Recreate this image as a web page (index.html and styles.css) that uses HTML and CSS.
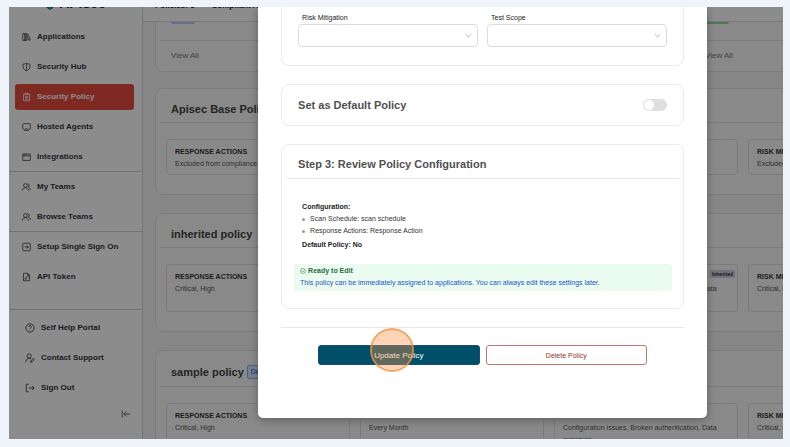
FILE: index.html
```html
<!DOCTYPE html>
<html lang="en">
<head>
  <meta charset="UTF-8" />
  <meta name="viewport" content="width=device-width, initial-scale=1.0" />
  <title>APIsec - Security Policy</title>
  <link rel="stylesheet" href="styles.css">
</head>
<body>
  <div class="app">
    <aside class="sidebar">
      <div class="logo">
        <svg class="logo-mark" viewBox="0 0 24 24"><path d="M9 2 3 8v8l7 6v-7M15 2l6 6v8l-7 6v-7"/></svg>
        <span>APIsec</span>
      </div>
      <nav class="menu">
        <a href="#"><svg viewBox="0 0 24 24"><path d="M2 3h6v18H2zM8 3h5v18H8zM13 6l4-1 5 15-4 1-5-13"/></svg>Applications</a>
        <a href="#"><svg viewBox="0 0 24 24"><path d="M12 2c3 2 6 2 9 2v7c0 6-4 9-9 11-5-2-9-5-9-11V4c3 0 6 0 9-2zM12 2v20"/></svg>Security Hub</a>
        <a href="#" class="active"><svg viewBox="0 0 24 24"><path d="M8 4H4v18h16V4h-4M8 2h8v4H8zM8 11h8M8 14h8M8 18h8"/></svg>Security Policy</a>
        <a href="#"><svg viewBox="0 0 24 24"><path d="M7 18H4a2 2 0 0 1-2-2V5a2 2 0 0 1 2-2h16a2 2 0 0 1 2 2v11a2 2 0 0 1-2 2h-3M12 15l5 6H7z"/></svg>Hosted Agents</a>
        <a href="#"><svg viewBox="0 0 24 24"><path d="M2 4h20v17H2zM2 9h20M6 4v4M10 4v4"/></svg>Integrations</a>
      </nav>
      <nav class="menu">
        <a href="#"><svg viewBox="0 0 24 24"><circle cx="9" cy="8" r="5"/><path d="M1 22c0-5 3-8 8-8s8 3 8 8M15 3a5 5 0 0 1 2 9c3 1 5 4 5 8"/></svg>My Teams</a>
        <a href="#"><svg viewBox="0 0 24 24"><circle cx="9" cy="8" r="5"/><path d="M1 22c0-5 3-8 8-8s8 3 8 8M15 3a5 5 0 0 1 2 9c3 1 5 4 5 8"/></svg>Browse Teams</a>
      </nav>
      <nav class="menu menu-settings">
        <a href="#"><svg viewBox="0 0 24 24"><rect x="2" y="2" width="20" height="20" rx="2"/><path d="M7 12h10M13 8l4 4-4 4"/></svg>Setup Single Sign On</a>
        <a href="#"><svg viewBox="0 0 24 24"><path d="M4 2h11l5 5v15H4zM15 2v5h5M11 14l5-5M14 9l3 2"/><circle cx="10" cy="16" r="2"/></svg>API Token</a>
      </nav>
      <nav class="menu menu-help">
        <a href="#"><svg viewBox="0 0 24 24"><circle cx="12" cy="12" r="10"/><path d="M9 9a3 3 0 1 1 4 3c-1 .5-1 1-1 2M12 17v1"/></svg>Self Help Portal</a>
        <a href="#"><svg viewBox="0 0 24 24"><circle cx="10" cy="7" r="5"/><path d="M2 22c0-6 3-9 8-9 2 0 3 0 4 1M14 22l1-5 5-4 2 3-5 5zM13 22h2"/></svg>Contact Support</a>
        <a href="#"><svg viewBox="0 0 24 24"><path d="M9 3H3v18h6M9 12h13M17 7l5 5-5 5"/></svg>Sign Out</a>
      </nav>
      <button class="collapse" aria-label="Collapse menu"><svg viewBox="0 0 24 24"><path d="M3 3v18M7 12h15M13 6l-6 6 6 6"/></svg></button>
    </aside>

    <main class="content">
      <header class="topbar">
        <span>Policies: 3</span>
        <span>Compliant Apps</span>
      </header>

      <div class="stats">
        <section class="stat">
          <div class="stat-bar"></div>
          <a href="#">View All</a>
        </section>
        <section class="stat">
          <div class="stat-bar green"></div>
          <a href="#">View All</a>
        </section>
      </div>

      <section class="policy">
        <h2>Apisec Base Policy</h2>
        <div class="policy-grid">
          <div class="box"><h3>RESPONSE ACTIONS</h3><p>Excluded from compliance</p></div>
          <div class="box"></div>
          <div class="box"></div>
          <div class="box"><h3>RISK MITIGATION</h3><p>Excluded from compliance</p></div>
        </div>
      </section>

      <section class="policy">
        <h2>inherited policy</h2>
        <div class="policy-grid">
          <div class="box"><h3>RESPONSE ACTIONS</h3><p>Critical, High</p></div>
          <div class="box"></div>
          <div class="box"><h3>TEST SCOPE <span class="inherited">Inherited</span></h3><p>Configuration issues, Broken authentication, Data exposure</p></div>
          <div class="box"><h3>RISK MITIGATION</h3><p>Critical, High</p></div>
        </div>
      </section>

      <section class="policy">
        <h2>sample policy <span class="default">Default</span></h2>
        <div class="policy-grid">
          <div class="box"><h3>RESPONSE ACTIONS</h3><p>Critical, High</p></div>
          <div class="box"><h3>SCAN SCHEDULE</h3><p>Every Month</p></div>
          <div class="box"><h3>TEST SCOPE</h3><p>Configuration issues, Broken authentication, Data exposure</p></div>
          <div class="box"><h3>RISK MITIGATION</h3><p>Critical, High</p></div>
        </div>
      </section>
    </main>

    <div class="overlay">
      <div class="modal" role="dialog" aria-label="Edit policy">
        <section class="panel fields">
          <div class="field">
            <label for="risk">Risk Mitigation</label>
            <div class="select-wrap">
              <select id="risk"><option></option></select>
              <svg viewBox="0 0 24 24"><path d="M3 6l9 12 9-12"/></svg>
            </div>
          </div>
          <div class="field">
            <label for="scope">Test Scope</label>
            <div class="select-wrap">
              <select id="scope"><option></option></select>
              <svg viewBox="0 0 24 24"><path d="M3 6l9 12 9-12"/></svg>
            </div>
          </div>
        </section>

        <section class="panel default-row">
          <label class="panel-title" for="default-policy">Set as Default Policy</label>
          <input type="checkbox" class="switch" id="default-policy">
        </section>

        <section class="panel review">
          <h2 class="panel-title">Step 3: Review Policy Configuration</h2>
          <div class="summary">
            <h4>Configuration:</h4>
            <ul>
              <li>Scan Schedule: scan schedule</li>
              <li>Response Actions: Response Action</li>
            </ul>
            <h4>Default Policy: No</h4>
          </div>
          <div class="notice">
            <strong><svg viewBox="0 0 24 24"><circle cx="12" cy="12" r="10"/><path d="M7 12l4 4 6-8"/></svg>Ready to Edit</strong>
            <p>This policy can be immediately assigned to applications. You can always edit these settings later.</p>
          </div>
        </section>

        <div class="actions">
          <button class="update">Update Policy<span class="click-mark"></span></button>
          <button class="delete">Delete Policy</button>
        </div>
      </div>
    </div>
  </div>
</body>
</html>
```

FILE: styles.css
```css
* {
  box-sizing: border-box;
}

body {
  margin: 0;
  height: 100vh;
  padding: 7px 7px 8px 9px;
  background: #eff4fa;
  font-family: "Liberation Sans", Arial, sans-serif;
  font-size: 7px;
  line-height: 12px;
  color: #222;
}

h2, h3, h4, p, ul {
  margin: 0;
  padding: 0;
}

a {
  color: inherit;
  text-decoration: none;
}

button {
  font-family: inherit;
  cursor: pointer;
}

svg {
  fill: none;
  stroke: currentColor;
  stroke-width: 2;
}

.app {
  position: relative;
  display: flex;
  height: 100%;
  overflow: hidden;
  background: #f5f5f5;
}

/* sidebar */
.sidebar {
  flex: none;
  width: 134px;
  background: #fff;
  border-right: 1px solid #cdd5e2;
  color: #33363d;
}

.logo {
  display: flex;
  justify-content: center;
  align-items: flex-end;
  gap: 3px;
  height: 15px;
  margin-top: -11px;
  padding-right: 1px;
  font-size: 14px;
  line-height: 16px;
  font-weight: bold;
  color: #0b2c3d;
}

.logo-mark {
  width: 12px;
  height: 15px;
  color: #00799a;
  stroke-width: 3;
}

.menu {
  padding: 0 8px 0 6px;
  border-bottom: 1px solid #cdd1d8;
}

.menu:first-of-type {
  padding-top: 11px;
}

.menu a {
  display: flex;
  align-items: center;
  gap: 6px;
  height: 26px;
  margin: 2px 0 4px;
  padding-left: 7px;
  border-radius: 3px;
  font-size: 8px;
  font-weight: bold;
}

.menu a:last-child {
  margin-bottom: 1px;
}

.menu svg {
  width: 9px;
  height: 10px;
}

.menu .active {
  background: #e54d40;
  color: #fff;
}

.menu-settings {
  padding-bottom: 18px;
}

.menu-help {
  padding-top: 3px;
  padding-left: 9px;
  border: none;
}

.menu-help svg {
  width: 10px;
}

.collapse {
  display: block;
  margin: 8px 11px 0 auto;
  padding: 0;
  border: none;
  background: none;
  color: #555;
}

.collapse svg {
  display: block;
  width: 10px;
  height: 10px;
}

/* policies list */
.content {
  flex: 1;
  min-width: 0;
  overflow: hidden;
}

.topbar {
  display: flex;
  gap: 17px;
  height: 15px;
  padding-left: 12px;
  background: #fff;
  border-bottom: 1px solid #ddd;
  font-size: 8px;
  line-height: 10px;
  font-weight: bold;
}

.topbar span {
  margin-top: -6px;
}

.stats {
  display: grid;
  grid-template-columns: 518px 518px;
  gap: 16px;
  padding-left: 12px;
}

.stat {
  height: 50px;
  padding: 0 4px;
  background: #fafafa;
  border: 1px solid #e4e4e4;
  border-top: none;
  border-radius: 0 0 8px 8px;
}

.stat-bar {
  height: 19px;
  border-bottom: 1px solid #e4e4e4;
}

.stat-bar::before {
  content: "";
  display: block;
  width: 24px;
  height: 2px;
  margin-left: 11px;
  border-radius: 0 0 2px 2px;
  background: #b9c6f5;
}

.stat-bar.green::before {
  background: #8fdc9f;
}

.stat a {
  display: block;
  padding: 9px 11px;
  font-size: 8px;
  color: #777;
}

.policy {
  width: 810px;
  margin: 16px 0 18px 12px;
  padding: 0 4px 19px;
  background: #fafafa;
  border: 1px solid #e4e4e4;
  border-radius: 8px;
}

.policy + .policy {
  margin-top: 0;
}

.policy h2 {
  display: flex;
  align-items: center;
  gap: 3px;
  padding: 14px 11px 7px;
  border-bottom: 1px solid #e4e4e4;
  font-size: 11px;
  color: #444;
}

.default {
  padding: 0 3px;
  border: 1px solid #7fb2f5;
  border-radius: 2px;
  background: #dbe9fd;
  font-size: 7px;
  font-weight: normal;
  color: #1d4fc0;
}

.policy-grid {
  display: grid;
  grid-template-columns: repeat(4, 184px);
  gap: 10px;
  padding: 16px 6px 0;
}

.box {
  padding: 6px 8px 4px;
  border: 1px solid #e0e0e0;
  border-radius: 4px;
}

.box h3 {
  display: flex;
  justify-content: space-between;
  font-size: 7px;
  color: #333;
}

.box p {
  color: #555;
}

.inherited {
  height: 8px;
  padding: 0 2px;
  margin: -1px -6px 0 0;
  border-radius: 1px;
  background: #d4d0e4;
  font-size: 5px;
  line-height: 8px;
}

/* edit dialog */
.overlay {
  position: absolute;
  inset: 0;
  background: rgba(0, 0, 0, 0.45);
}

.modal {
  width: 58%;
  margin: 0 76px 0 auto;
  padding: 0 23px 53px;
  background: #fff;
  border-radius: 0 0 5px 5px;
  box-shadow: 0 2px 8px rgba(0, 0, 0, 0.3);
}

.panel {
  margin-bottom: 18px;
  border: 1px solid #ebebeb;
  border-radius: 8px;
}

.panel-title {
  font-size: 11px;
  font-weight: bold;
  color: #505050;
}

.fields {
  display: flex;
  gap: 9px;
  padding: 5px 16px 18px;
  border-top: none;
  border-radius: 0 0 8px 8px;
}

.field {
  flex: 1;
}

.field label {
  display: block;
  padding-left: 4px;
}

.select-wrap {
  display: grid;
  align-items: center;
}

.select-wrap select,
.select-wrap svg {
  grid-area: 1 / 1;
}

.select-wrap select {
  width: 100%;
  height: 23px;
  appearance: none;
  background: #fff;
  border: 1px solid #dcdcdc;
  border-radius: 4px;
}

.select-wrap svg {
  justify-self: end;
  width: 7px;
  height: 7px;
  margin-right: 6px;
  color: #bbb;
  stroke-width: 3;
  pointer-events: none;
}

.default-row {
  display: flex;
  justify-content: space-between;
  align-items: center;
  height: 42px;
  padding: 0 16px;
}

.switch {
  display: flex;
  align-items: center;
  width: 24px;
  height: 12px;
  margin: 0;
  padding: 1px;
  appearance: none;
  border-radius: 6px;
  background: #dfdfe2;
}

.switch::before {
  content: "";
  width: 10px;
  height: 10px;
  border-radius: 50%;
  background: #fff;
}

.switch:checked {
  justify-content: flex-end;
  background: #004f68;
}

.review {
  padding: 0 4px 17px;
}

.review .panel-title {
  height: 34px;
  padding: 13px 12px 0;
  border-bottom: 1px solid #e8e8e8;
}

.summary {
  padding: 22px 16px 13px;
}

.summary h4 {
  font-size: 7px;
}

.summary ul {
  margin-bottom: 2px;
  list-style: none;
}

.summary li {
  display: flex;
  align-items: center;
  gap: 5px;
  color: #333;
}

.summary li::before {
  content: "";
  width: 3px;
  height: 3px;
  border-radius: 50%;
  background: #999;
}

.notice {
  margin: 0 7px 0 8px;
  padding: 1px 6px 2px;
  border-radius: 3px;
  background: #eafbef;
}

.notice strong {
  display: flex;
  align-items: center;
  gap: 2px;
  color: #2c6b41;
}

.notice svg {
  width: 6px;
  height: 6px;
}

.notice p {
  color: #2453c9;
}

.actions {
  display: flex;
  gap: 6px;
  padding: 17px 37px 0;
  border-top: 1px solid #e8e8e8;
}

.actions button {
  flex: 1;
  height: 20px;
  padding: 0;
  border-radius: 3px;
}

.update {
  position: relative;
  background: #004f68;
  border: 1px solid #1c4a7c;
  font-size: 8px;
  color: #fff;
}

.delete {
  background: #fff;
  border: 1px solid #c0766c;
  font-size: 7px;
  color: #8c2f26;
}

/* click highlight over the button */
.click-mark {
  position: absolute;
  top: -18px;
  left: 51px;
  width: 44px;
  height: 44px;
  border: 2px solid rgba(243, 146, 66, 0.7);
  border-radius: 50%;
  background: rgba(247, 145, 70, 0.38);
}
```
